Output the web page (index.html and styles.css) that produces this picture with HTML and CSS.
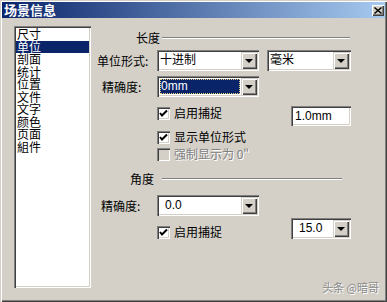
FILE: index.html
```html
<!DOCTYPE html>
<html lang="zh-CN">

<head>
    <meta charset="UTF-8">
    <title>场景信息</title>
    <link rel="stylesheet" href="styles.css">
</head>

<body>
    <div class="dialog">
        <div class="titlebar">
            <span class="title">场景信息</span>
            <span class="close">
                <svg width="8" height="7" viewBox="0 0 8 7"><path d="M0.5 0.5 L7.5 6.5 M7.5 0.5 L0.5 6.5" stroke="#000" stroke-width="1.4"/></svg>
            </span>
        </div>
        <div class="content">
            <ul class="list">
                <li>尺寸</li>
                <li class="selected">单位</li>
                <li>剖面</li>
                <li>统计</li>
                <li>位置</li>
                <li>文件</li>
                <li>文字</li>
                <li>颜色</li>
                <li>页面</li>
                <li>組件</li>
            </ul>

            <div class="panel">
                <div class="group-head head-length"><span>长度</span><i class="rule"></i></div>

                <div class="row row-unit">
                    <span class="lbl lbl-unit">单位形式:</span>
                    <div class="combo w-wide"><span class="value">十进制</span><span class="drop"><i class="arrow"></i></span></div>
                    <div class="combo w-small second"><span class="value">毫米</span><span class="drop"><i class="arrow"></i></span></div>
                </div>

                <div class="row row-prec">
                    <span class="lbl lbl-prec">精确度:</span>
                    <div class="combo w-wide focused"><span class="value"><em>0mm</em></span><span class="drop"><i class="arrow"></i></span></div>
                </div>

                <div class="row row-snap">
                    <label class="check"><span class="box checked"><svg width="9" height="9" viewBox="0 0 9 9"><polyline points="1,4 3,6.5 8,1.5" fill="none" stroke="#000" stroke-width="2"/></svg></span>启用捕捉</label>
                    <div class="field w-small">1.0mm</div>
                </div>

                <div class="row row-show">
                    <label class="check"><span class="box checked"><svg width="9" height="9" viewBox="0 0 9 9"><polyline points="1,4 3,6.5 8,1.5" fill="none" stroke="#000" stroke-width="2"/></svg></span>显示单位形式</label>
                </div>

                <div class="row row-force">
                    <label class="check disabled"><span class="box"></span>强制显示为 0"</label>
                </div>

                <div class="group-head head-angle"><span>角度</span><i class="rule"></i></div>

                <div class="row row-aprec">
                    <span class="lbl lbl-aprec">精确度:</span>
                    <div class="combo w-wide"><span class="value pad">0.0</span><span class="drop"><i class="arrow"></i></span></div>
                </div>

                <div class="row row-asnap">
                    <label class="check low"><span class="box checked"><svg width="9" height="9" viewBox="0 0 9 9"><polyline points="1,4 3,6.5 8,1.5" fill="none" stroke="#000" stroke-width="2"/></svg></span>启用捕捉</label>
                    <div class="combo w-small"><span class="value pad">15.0</span><span class="drop"><i class="arrow"></i></span></div>
                </div>
            </div>
        </div>
        <div class="watermark">头条 @暗哥</div>
    </div>
</body>

</html>
```

FILE: styles.css
```css
* {
    margin: 0;
    padding: 0;
    box-sizing: border-box;
}

body {
    width: 387px;
    height: 302px;
    background: #d4d0c8;
    font-family: 'Liberation Sans', 'Noto Sans CJK SC', sans-serif;
    font-size: 12px;
    color: #000;
    overflow: hidden;
}

.dialog {
    position: relative;
    width: 387px;
    height: 302px;
    padding: 2px;
    background: #d4d0c8;
    box-shadow: inset 1px 1px 0 #d4d0c8, inset 2px 2px 0 #ffffff, inset -1px -1px 0 #404040, inset -2px -2px 0 #808080;
    display: flex;
    flex-direction: column;
}

.titlebar {
    height: 16px;
    background: linear-gradient(to right, #0a246a, #a6caf0);
    display: flex;
    align-items: center;
    justify-content: space-between;
    padding: 0 1px 0 2px;
}

.title {
    color: #ffffff;
    font-family: 'Noto Sans CJK SC', sans-serif;
    font-weight: 700;
    font-size: 13px;
    line-height: 16px;
    letter-spacing: 0;
}

.close {
    width: 12px;
    height: 11px;
    background: #d4d0c8;
    box-shadow: inset 1px 1px 0 #ffffff, inset -1px -1px 0 #404040, inset -2px -2px 0 #808080;
    display: flex;
    align-items: center;
    justify-content: center;
    margin-top: 1px;
}

.content {
    flex: 1;
    display: flex;
}

/* left list */
.list {
    list-style: none;
    width: 77px;
    height: 262px;
    margin: 8px 0 0 12px;
    padding: 2px;
    background: #ffffff;
    box-shadow: inset 1px 1px 0 #808080, inset 2px 2px 0 #404040, inset -1px -1px 0 #ffffff, inset -2px -2px 0 #d4d0c8;
}

.list li {
    font-family: 'Noto Sans CJK SC', sans-serif;
    line-height: 12.5px;
    height: 12.5px;
    padding-left: 1px;
}

.list li.selected {
    background: #0a246a;
    color: #ffffff;
}

/* right panel */
.panel {
    flex: 1;
    padding-top: 13px;
    display: flex;
    flex-direction: column;
}

.group-head {
    height: 13px;
    display: flex;
    align-items: center;
    font-family: 'Noto Sans CJK SC', sans-serif;
    line-height: 13px;
}

.rule {
    flex: 1;
    height: 2px;
    border-top: 1px solid #808080;
    border-bottom: 1px solid #ffffff;
}

.head-length {
    width: 259px;
    padding-left: 45px;
}

.head-length .rule {
    margin-left: 2px;
}

.head-angle {
    width: 251px;
    padding-left: 39px;
    margin-top: 11px;
}

.head-angle .rule {
    margin-left: 8px;
}

.row {
    display: flex;
    align-items: center;
    font-family: 'Noto Sans CJK SC', sans-serif;
}

.row-unit { height: 21px; margin-top: 6px; }
.row-prec { height: 21px; margin-top: 5px; }
.row-snap { height: 20px; margin-top: 9px; align-items: flex-start; }
.row-show { height: 14px; margin-top: 4px; }
.row-force { height: 14px; margin-top: 3px; }
.row-aprec { height: 21px; margin-top: 10px; }
.row-asnap { height: 21px; margin-top: 2px; align-items: flex-start; }

.lbl {
    line-height: 14px;
}

.lbl-unit { margin-left: 6px; width: 60px; }
.lbl-prec { margin-left: 11px; width: 55px; }
.lbl-aprec { margin-left: 10px; width: 56px; }

/* combo boxes and fields */
.combo,
.field {
    height: 21px;
    background: #ffffff;
    box-shadow: inset 1px 1px 0 #808080, inset 2px 2px 0 #404040, inset -1px -1px 0 #ffffff, inset -2px -2px 0 #d4d0c8;
    display: flex;
    align-items: center;
    padding: 2px;
}

.w-wide { width: 102px; }
.w-small { width: 60px; }
.combo.second { width: 84px; margin-left: 8px; }

.combo .value {
    flex: 1;
    height: 17px;
    line-height: 17px;
    padding-left: 1px;
    font-family: 'Liberation Sans', 'Noto Sans CJK SC', sans-serif;
    font-size: 12px;
    overflow: hidden;
    white-space: nowrap;
}

.combo .value.pad {
    padding-left: 6px;
}

.combo.focused .value {
    padding: 1px;
}

.combo.focused em {
    display: block;
    font-style: normal;
    height: 15px;
    line-height: 14px;
    padding-left: 1px;
    background: #0a246a;
    color: #ffffff;
    outline: 1px dotted #e8d080;
    outline-offset: -1px;
}

.drop {
    width: 16px;
    height: 17px;
    background: #d4d0c8;
    box-shadow: inset 1px 1px 0 #d4d0c8, inset 2px 2px 0 #ffffff, inset -1px -1px 0 #404040, inset -2px -2px 0 #808080;
    display: flex;
    align-items: center;
    justify-content: center;
}

.arrow {
    width: 0;
    height: 0;
    border-left: 4px solid transparent;
    border-right: 4px solid transparent;
    border-top: 4px solid #000000;
    margin-left: -1px;
}

.field {
    height: 20px;
    padding-left: 4px;
    font-family: 'Liberation Sans', sans-serif;
    line-height: 16px;
}

.row-asnap .combo {
    margin-top: 0;
}

/* check boxes */
.check {
    display: flex;
    align-items: center;
    margin-left: 66px;
    width: 134px;
    line-height: 14px;
    white-space: nowrap;
}

.row-snap .check {
    margin-top: 0;
}

.check.low {
    margin-top: 7px;
}

.box {
    width: 13px;
    height: 13px;
    margin-right: 4px;
    background: #ffffff;
    box-shadow: inset 1px 1px 0 #808080, inset 2px 2px 0 #404040, inset -1px -1px 0 #ffffff, inset -2px -2px 0 #d4d0c8;
    display: flex;
    align-items: center;
    justify-content: center;
}

.check.disabled {
    color: #808080;
    text-shadow: 1px 1px 0 #ffffff;
}

.check.disabled .box {
    background: #d4d0c8;
}

.watermark {
    position: absolute;
    right: 8px;
    bottom: 9px;
    font-family: 'Noto Sans CJK SC', sans-serif;
    font-size: 11px;
    line-height: 12px;
    color: #8a8a8a;
    text-shadow: 1px 1px 0 #ffffff;
}
```
